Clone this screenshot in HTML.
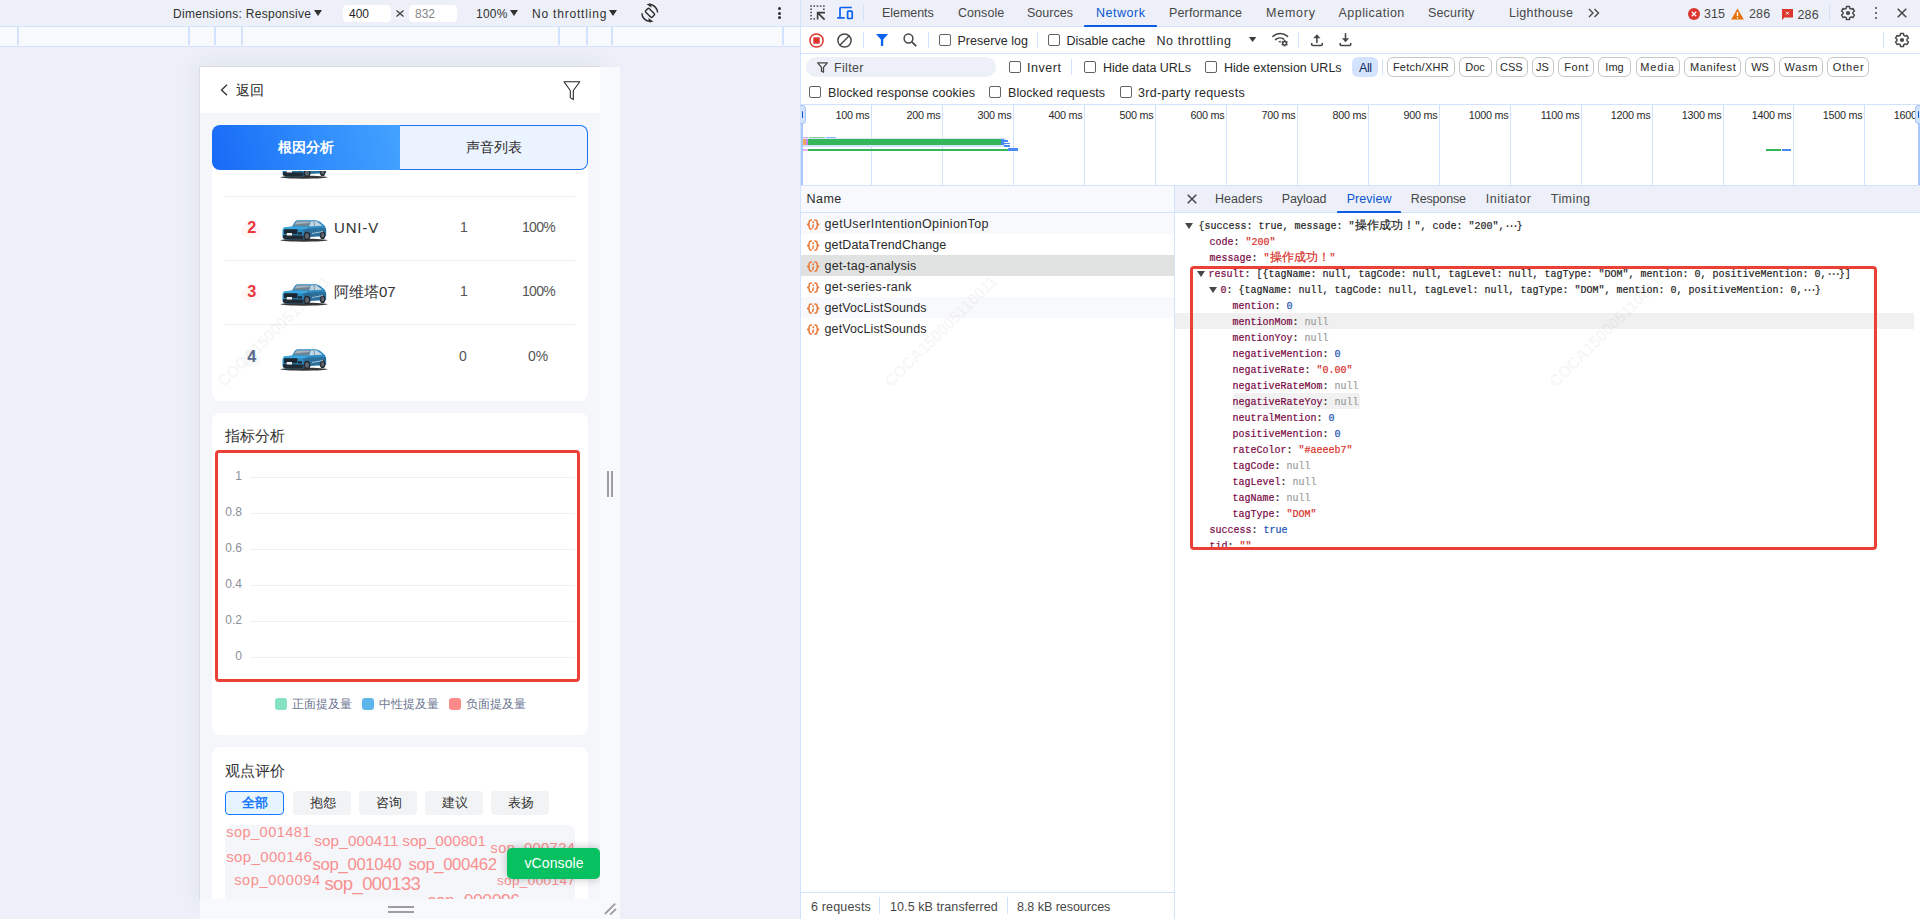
<!DOCTYPE html><html><head><meta charset="utf-8"><style>
html,body{margin:0;padding:0;width:1920px;height:919px;overflow:hidden;background:#edf0f8;font-family:'Liberation Sans',sans-serif;}
.a{position:absolute;box-sizing:border-box}
.t{position:absolute;white-space:nowrap}
svg{position:absolute;overflow:visible}
</style></head><body>

<div class="t" style="left:173px;top:7.84px;font-size:12px;line-height:12px;color:#303030;font-weight:400;font-family:'Liberation Sans',sans-serif;letter-spacing:0.283px;">Dimensions: Responsive</div>
<svg style="left:314px;top:10px" width="8" height="6"><path d="M0 0H8L4.0 6Z" fill="#303030"/></svg>
<div class="a" style="left:343px;top:5px;width:48px;height:17px;background:#fff;border-radius:4px"></div>
<div class="t" style="left:349px;top:7.84px;font-size:12px;line-height:12px;color:#1f1f1f;font-weight:400;font-family:'Liberation Sans',sans-serif;">400</div>
<svg style="left:396px;top:10px" width="8" height="7"><path d="M0.5 0.5L7.5 6.5M7.5 0.5L0.5 6.5" stroke="#3a3a3a" stroke-width="1.15"/></svg>
<div class="a" style="left:409px;top:5px;width:48px;height:17px;background:#fff;border-radius:4px"></div>
<div class="t" style="left:415px;top:7.84px;font-size:12px;line-height:12px;color:#858585;font-weight:400;font-family:'Liberation Sans',sans-serif;">832</div>
<div class="t" style="left:476px;top:7.84px;font-size:12px;line-height:12px;color:#303030;font-weight:400;font-family:'Liberation Sans',sans-serif;letter-spacing:0.232px;">100%</div>
<svg style="left:510px;top:10px" width="8" height="6"><path d="M0 0H8L4.0 6Z" fill="#303030"/></svg>
<div class="t" style="left:532px;top:7.84px;font-size:12px;line-height:12px;color:#303030;font-weight:400;font-family:'Liberation Sans',sans-serif;letter-spacing:0.800px;">No throttling</div>
<svg style="left:609px;top:10px" width="8" height="6"><path d="M0 0H8L4.0 6Z" fill="#303030"/></svg>
<svg style="left:636px;top:0px" width="28" height="26" viewBox="0 0 28 26"><g fill="none" stroke="#303030" stroke-width="1.5">
<rect x="9.4" y="10.4" width="9.2" height="5" rx="1.2" transform="rotate(45 14 12.9)"/>
<path d="M21.6 12.6A8.2 8.2 0 0 0 13.2 4.6"/><path d="M5.9 13.2A8.2 8.2 0 0 0 14.6 21.3"/></g>
<path d="M10.6 4.2L14.6 3.2L15.6 7.8Z" fill="#303030"/><path d="M17.4 21.6L13.4 22.4L12.2 17.9Z" fill="#303030"/></svg>
<div class="a" style="left:777.5px;top:7px;width:3px;height:3px;background:#303030;border-radius:50%"></div>
<div class="a" style="left:777.5px;top:11.5px;width:3px;height:3px;background:#303030;border-radius:50%"></div>
<div class="a" style="left:777.5px;top:16px;width:3px;height:3px;background:#303030;border-radius:50%"></div>
<div class="a" style="left:0px;top:26px;width:800px;height:21px;background:#f8f9fd;border-top:1px solid #d3e3fd;border-bottom:1px solid #d3e3fd"></div>
<div class="a" style="left:16.5px;top:27px;width:2px;height:18px;background:#d3e3fd"></div>
<div class="a" style="left:188px;top:27px;width:2px;height:18px;background:#d3e3fd"></div>
<div class="a" style="left:213.5px;top:27px;width:2px;height:18px;background:#d3e3fd"></div>
<div class="a" style="left:240.5px;top:27px;width:2px;height:18px;background:#d3e3fd"></div>
<div class="a" style="left:558px;top:27px;width:2px;height:18px;background:#d3e3fd"></div>
<div class="a" style="left:586px;top:27px;width:2px;height:18px;background:#d3e3fd"></div>
<div class="a" style="left:611px;top:27px;width:2px;height:18px;background:#d3e3fd"></div>
<div class="a" style="left:782px;top:27px;width:2px;height:18px;background:#d3e3fd"></div>
<div class="a" style="left:200px;top:67px;width:400px;height:832px;box-shadow:0 0 22px 2px rgba(40,50,90,0.07);background:#f5f6fa"></div>
<div class="a" style="left:199px;top:66px;width:1px;height:833px;background:#dcdee4"></div>
<div class="a" style="left:199px;top:66px;width:401px;height:1px;background:#dcdee4"></div>
<div class="a" style="left:200px;top:67px;width:400px;height:46px;background:#fff"></div>
<svg style="left:220px;top:84px" width="8" height="12"><path d="M7 0.8L1.5 6L7 11.2" fill="none" stroke="#303030" stroke-width="1.3"/></svg>
<div class="t" style="left:236px;top:83.15px;font-size:14px;line-height:14px;color:#1f1f1f;font-weight:400;font-family:'Liberation Sans',sans-serif;">返回</div>
<svg style="left:563px;top:81px" width="18" height="20"><path d="M1 0.7H16.8L10.3 9.5V18.6L7.3 16.6V9.5Z" fill="none" stroke="#222" stroke-width="1.05" stroke-linejoin="round"/></svg>
<div class="a" style="left:212px;top:150px;width:376px;height:251px;background:#fff;border-radius:0 0 8px 8px"></div>
<div class="a" style="left:212px;top:125px;width:188px;height:45px;background:linear-gradient(75deg,#186af6 0%,#2f8cfc 55%,#44a2ff 100%);border-radius:8px 0 0 8px"></div>
<div class="a" style="left:400px;top:125px;width:188px;height:45px;background:#ebf3ff;border:1px solid #1b72f5;border-left:none;border-radius:0 8px 8px 0"></div>
<div class="t" style="left:278px;top:140.40px;font-size:14.3px;line-height:14.3px;color:#fff;font-weight:700;font-family:'Liberation Sans',sans-serif;">根因分析</div>
<div class="t" style="left:466px;top:140.15px;font-size:14px;line-height:14px;color:#2b2b2b;font-weight:400;font-family:'Liberation Sans',sans-serif;">声音列表</div>
<div class="a" style="left:225px;top:196px;width:350px;height:1px;background:#eceef2"></div>
<div class="a" style="left:225px;top:260px;width:350px;height:1px;background:#eceef2"></div>
<div class="a" style="left:225px;top:324px;width:350px;height:1px;background:#eceef2"></div>
<div class="a" style="left:212px;top:171px;width:376px;height:10px;overflow:hidden">
<svg style="left:64px;top:-18.5px" width="56" height="28" viewBox="0 0 56 28">
<ellipse cx="28" cy="24.2" rx="23.5" ry="1.5" fill="#050505" opacity="0.8"/>
<path d="M6.5 14L8 11.5L16 10.5L19 5.5L21 4.3H40L44 5.8L49 10L50.2 14V19.5L48.5 21L44 21L43 20.2L35 20.8L34 22L27.5 23.2L9 23.6L6.5 21.5Z" fill="#2b8bc2"/>
<path d="M27 13L50 12V19.5L43 20.2L35 20.8L28 19.5Z" fill="#2d6f98"/>
<path d="M8 11.6L17 10.4L33.5 10.6L29 13.2L8.2 13.2Z" fill="#3ba7de"/>
<path d="M17.5 9.8L20.5 5.2L34.5 5L32.5 10.4Z" fill="#6f8493"/><path d="M18.3 8.6L20.8 5.6L33.8 5.4L33.2 7Z" fill="#9fb2bf"/>
<path d="M34.8 5.3L40.5 5.3L46.5 9.8L33.2 10.4Z" fill="#c3d5e2"/>
<path d="M38 5.3L38.6 10" stroke="#6c8aa0" stroke-width="0.8"/>
<rect x="8" y="13.2" width="13.5" height="5" rx="1" fill="#1c2731"/>
<path d="M7 19L27.5 19.5L27.5 23.2L9 23.6L7 22Z" fill="#202b35"/>
<rect x="10.7" y="17" width="5.3" height="2.5" fill="#eef2f4"/>
<rect x="22" y="16.3" width="4" height="2.2" fill="#1c2731"/>
<ellipse cx="31" cy="20" rx="3.3" ry="4.2" fill="#262b32"/><ellipse cx="31" cy="20" rx="2" ry="2.8" fill="#5f6772"/>
<ellipse cx="46.6" cy="19.2" rx="2.7" ry="3.9" fill="#262b32"/><ellipse cx="46.6" cy="19.2" rx="1.5" ry="2.4" fill="#5f6772"/>
<path d="M36 17.5L47 15.5" stroke="#a9cfe6" stroke-width="0.9"/>
</svg>
</div>
<svg style="left:241px;top:218px" width="20" height="21"><path d="M8.8 1C11 5 20 8.5 20 13A10 6.8 0 0 1 0 13C0 8.5 6.5 5 8.8 1Z" fill="rgba(255,110,110,0.06)"/></svg>
<div class="t" style="left:247.2px;top:219.20px;font-size:16.3px;line-height:16.3px;color:#e8383d;font-weight:700;font-family:'Liberation Sans',sans-serif;">2</div>
<svg style="left:276px;top:216px" width="56" height="28" viewBox="0 0 56 28">
<ellipse cx="28" cy="24.2" rx="23.5" ry="1.5" fill="#050505" opacity="0.8"/>
<path d="M6.5 14L8 11.5L16 10.5L19 5.5L21 4.3H40L44 5.8L49 10L50.2 14V19.5L48.5 21L44 21L43 20.2L35 20.8L34 22L27.5 23.2L9 23.6L6.5 21.5Z" fill="#2b8bc2"/>
<path d="M27 13L50 12V19.5L43 20.2L35 20.8L28 19.5Z" fill="#2d6f98"/>
<path d="M8 11.6L17 10.4L33.5 10.6L29 13.2L8.2 13.2Z" fill="#3ba7de"/>
<path d="M17.5 9.8L20.5 5.2L34.5 5L32.5 10.4Z" fill="#6f8493"/><path d="M18.3 8.6L20.8 5.6L33.8 5.4L33.2 7Z" fill="#9fb2bf"/>
<path d="M34.8 5.3L40.5 5.3L46.5 9.8L33.2 10.4Z" fill="#c3d5e2"/>
<path d="M38 5.3L38.6 10" stroke="#6c8aa0" stroke-width="0.8"/>
<rect x="8" y="13.2" width="13.5" height="5" rx="1" fill="#1c2731"/>
<path d="M7 19L27.5 19.5L27.5 23.2L9 23.6L7 22Z" fill="#202b35"/>
<rect x="10.7" y="17" width="5.3" height="2.5" fill="#eef2f4"/>
<rect x="22" y="16.3" width="4" height="2.2" fill="#1c2731"/>
<ellipse cx="31" cy="20" rx="3.3" ry="4.2" fill="#262b32"/><ellipse cx="31" cy="20" rx="2" ry="2.8" fill="#5f6772"/>
<ellipse cx="46.6" cy="19.2" rx="2.7" ry="3.9" fill="#262b32"/><ellipse cx="46.6" cy="19.2" rx="1.5" ry="2.4" fill="#5f6772"/>
<path d="M36 17.5L47 15.5" stroke="#a9cfe6" stroke-width="0.9"/>
</svg>
<div class="t" style="left:334px;top:220.30px;font-size:15px;line-height:15px;color:#333;font-weight:400;font-family:'Liberation Sans',sans-serif;letter-spacing:0.839px;">UNI-V</div>
<div class="t" style="left:460px;top:220.15px;font-size:14px;line-height:14px;color:#555;font-weight:400;font-family:'Liberation Sans',sans-serif;">1</div>
<div class="t" style="left:522px;top:220.15px;font-size:14px;line-height:14px;color:#555;font-weight:400;font-family:'Liberation Sans',sans-serif;letter-spacing:-0.704px;">100%</div>
<svg style="left:241px;top:282px" width="20" height="21"><path d="M8.8 1C11 5 20 8.5 20 13A10 6.8 0 0 1 0 13C0 8.5 6.5 5 8.8 1Z" fill="rgba(255,110,110,0.06)"/></svg>
<div class="t" style="left:247.2px;top:283.20px;font-size:16.3px;line-height:16.3px;color:#e8383d;font-weight:700;font-family:'Liberation Sans',sans-serif;">3</div>
<svg style="left:276px;top:280px" width="56" height="28" viewBox="0 0 56 28">
<ellipse cx="28" cy="24.2" rx="23.5" ry="1.5" fill="#050505" opacity="0.8"/>
<path d="M6.5 14L8 11.5L16 10.5L19 5.5L21 4.3H40L44 5.8L49 10L50.2 14V19.5L48.5 21L44 21L43 20.2L35 20.8L34 22L27.5 23.2L9 23.6L6.5 21.5Z" fill="#2b8bc2"/>
<path d="M27 13L50 12V19.5L43 20.2L35 20.8L28 19.5Z" fill="#2d6f98"/>
<path d="M8 11.6L17 10.4L33.5 10.6L29 13.2L8.2 13.2Z" fill="#3ba7de"/>
<path d="M17.5 9.8L20.5 5.2L34.5 5L32.5 10.4Z" fill="#6f8493"/><path d="M18.3 8.6L20.8 5.6L33.8 5.4L33.2 7Z" fill="#9fb2bf"/>
<path d="M34.8 5.3L40.5 5.3L46.5 9.8L33.2 10.4Z" fill="#c3d5e2"/>
<path d="M38 5.3L38.6 10" stroke="#6c8aa0" stroke-width="0.8"/>
<rect x="8" y="13.2" width="13.5" height="5" rx="1" fill="#1c2731"/>
<path d="M7 19L27.5 19.5L27.5 23.2L9 23.6L7 22Z" fill="#202b35"/>
<rect x="10.7" y="17" width="5.3" height="2.5" fill="#eef2f4"/>
<rect x="22" y="16.3" width="4" height="2.2" fill="#1c2731"/>
<ellipse cx="31" cy="20" rx="3.3" ry="4.2" fill="#262b32"/><ellipse cx="31" cy="20" rx="2" ry="2.8" fill="#5f6772"/>
<ellipse cx="46.6" cy="19.2" rx="2.7" ry="3.9" fill="#262b32"/><ellipse cx="46.6" cy="19.2" rx="1.5" ry="2.4" fill="#5f6772"/>
<path d="M36 17.5L47 15.5" stroke="#a9cfe6" stroke-width="0.9"/>
</svg>
<div class="t" style="left:334px;top:284.30px;font-size:15px;line-height:15px;color:#333;font-weight:400;font-family:'Liberation Sans',sans-serif;">阿维塔07</div>
<div class="t" style="left:460px;top:284.15px;font-size:14px;line-height:14px;color:#555;font-weight:400;font-family:'Liberation Sans',sans-serif;">1</div>
<div class="t" style="left:522px;top:284.15px;font-size:14px;line-height:14px;color:#555;font-weight:400;font-family:'Liberation Sans',sans-serif;letter-spacing:-0.704px;">100%</div>
<svg style="left:241px;top:347px" width="20" height="21"><path d="M8.8 1C11 5 20 8.5 20 13A10 6.8 0 0 1 0 13C0 8.5 6.5 5 8.8 1Z" fill="rgba(120,140,180,0.05)"/></svg>
<div class="t" style="left:247.2px;top:348.20px;font-size:16.3px;line-height:16.3px;color:#5b6b8d;font-weight:700;font-family:'Liberation Sans',sans-serif;">4</div>
<svg style="left:276px;top:344.5px" width="56" height="28" viewBox="0 0 56 28">
<ellipse cx="28" cy="24.2" rx="23.5" ry="1.5" fill="#050505" opacity="0.8"/>
<path d="M6.5 14L8 11.5L16 10.5L19 5.5L21 4.3H40L44 5.8L49 10L50.2 14V19.5L48.5 21L44 21L43 20.2L35 20.8L34 22L27.5 23.2L9 23.6L6.5 21.5Z" fill="#2b8bc2"/>
<path d="M27 13L50 12V19.5L43 20.2L35 20.8L28 19.5Z" fill="#2d6f98"/>
<path d="M8 11.6L17 10.4L33.5 10.6L29 13.2L8.2 13.2Z" fill="#3ba7de"/>
<path d="M17.5 9.8L20.5 5.2L34.5 5L32.5 10.4Z" fill="#6f8493"/><path d="M18.3 8.6L20.8 5.6L33.8 5.4L33.2 7Z" fill="#9fb2bf"/>
<path d="M34.8 5.3L40.5 5.3L46.5 9.8L33.2 10.4Z" fill="#c3d5e2"/>
<path d="M38 5.3L38.6 10" stroke="#6c8aa0" stroke-width="0.8"/>
<rect x="8" y="13.2" width="13.5" height="5" rx="1" fill="#1c2731"/>
<path d="M7 19L27.5 19.5L27.5 23.2L9 23.6L7 22Z" fill="#202b35"/>
<rect x="10.7" y="17" width="5.3" height="2.5" fill="#eef2f4"/>
<rect x="22" y="16.3" width="4" height="2.2" fill="#1c2731"/>
<ellipse cx="31" cy="20" rx="3.3" ry="4.2" fill="#262b32"/><ellipse cx="31" cy="20" rx="2" ry="2.8" fill="#5f6772"/>
<ellipse cx="46.6" cy="19.2" rx="2.7" ry="3.9" fill="#262b32"/><ellipse cx="46.6" cy="19.2" rx="1.5" ry="2.4" fill="#5f6772"/>
<path d="M36 17.5L47 15.5" stroke="#a9cfe6" stroke-width="0.9"/>
</svg>
<div class="t" style="left:459px;top:349.15px;font-size:14px;line-height:14px;color:#555;font-weight:400;font-family:'Liberation Sans',sans-serif;">0</div>
<div class="t" style="left:528px;top:349.15px;font-size:14px;line-height:14px;color:#555;font-weight:400;font-family:'Liberation Sans',sans-serif;letter-spacing:0.066px;">0%</div>
<div class="a" style="left:212px;top:413px;width:376px;height:322px;background:#fff;border-radius:8px"></div>
<div class="t" style="left:225px;top:428.30px;font-size:15px;line-height:15px;color:#333;font-weight:400;font-family:'Liberation Sans',sans-serif;">指标分析</div>
<div class="a" style="left:250px;top:477px;width:325px;height:1px;background:#eef0f4"></div>
<div class="t" style="left:190px;width:52px;text-align:right;top:469px;font-size:12px;line-height:14px;color:#8a8f99">1</div>
<div class="a" style="left:250px;top:513px;width:325px;height:1px;background:#eef0f4"></div>
<div class="t" style="left:190px;width:52px;text-align:right;top:505px;font-size:12px;line-height:14px;color:#8a8f99">0.8</div>
<div class="a" style="left:250px;top:549px;width:325px;height:1px;background:#eef0f4"></div>
<div class="t" style="left:190px;width:52px;text-align:right;top:541px;font-size:12px;line-height:14px;color:#8a8f99">0.6</div>
<div class="a" style="left:250px;top:585px;width:325px;height:1px;background:#eef0f4"></div>
<div class="t" style="left:190px;width:52px;text-align:right;top:577px;font-size:12px;line-height:14px;color:#8a8f99">0.4</div>
<div class="a" style="left:250px;top:621px;width:325px;height:1px;background:#eef0f4"></div>
<div class="t" style="left:190px;width:52px;text-align:right;top:613px;font-size:12px;line-height:14px;color:#8a8f99">0.2</div>
<div class="a" style="left:250px;top:657px;width:325px;height:1px;background:#eef0f4"></div>
<div class="t" style="left:190px;width:52px;text-align:right;top:649px;font-size:12px;line-height:14px;color:#8a8f99">0</div>
<div class="a" style="left:215px;top:450px;width:365px;height:232px;border:3px solid #ec3f35;border-radius:4px"></div>
<div class="a" style="left:274.5px;top:698px;width:12px;height:12px;background:#84e1c2;border-radius:3px"></div>
<div class="t" style="left:291.5px;top:697.84px;font-size:12px;line-height:12px;color:#6b7590;font-weight:400;font-family:'Liberation Sans',sans-serif;">正面提及量</div>
<div class="a" style="left:361.5px;top:698px;width:12px;height:12px;background:#5eb6ea;border-radius:3px"></div>
<div class="t" style="left:378.5px;top:697.84px;font-size:12px;line-height:12px;color:#6b7590;font-weight:400;font-family:'Liberation Sans',sans-serif;">中性提及量</div>
<div class="a" style="left:448.5px;top:698px;width:12px;height:12px;background:#fe8a8a;border-radius:3px"></div>
<div class="t" style="left:465.5px;top:697.84px;font-size:12px;line-height:12px;color:#6b7590;font-weight:400;font-family:'Liberation Sans',sans-serif;">负面提及量</div>
<div class="a" style="left:212px;top:747px;width:376px;height:200px;background:#fff;border-radius:8px"></div>
<div class="t" style="left:225px;top:763.30px;font-size:15px;line-height:15px;color:#333;font-weight:400;font-family:'Liberation Sans',sans-serif;">观点评价</div>
<div class="a" style="left:225px;top:791px;width:59px;height:24px;background:#e6f4ff;border:1px solid #1677ff;border-radius:4px"></div>
<div class="t" style="left:242px;top:796.00px;font-size:13px;line-height:13px;color:#1677ff;font-weight:700;font-family:'Liberation Sans',sans-serif;">全部</div>
<div class="a" style="left:293px;top:791px;width:58px;height:24px;background:#f2f3f5;border-radius:4px"></div>
<div class="t" style="left:309.5px;top:795.50px;font-size:13px;line-height:13px;color:#333;font-weight:400;font-family:'Liberation Sans',sans-serif;">抱怨</div>
<div class="a" style="left:359px;top:791px;width:58px;height:24px;background:#f2f3f5;border-radius:4px"></div>
<div class="t" style="left:375.5px;top:795.50px;font-size:13px;line-height:13px;color:#333;font-weight:400;font-family:'Liberation Sans',sans-serif;">咨询</div>
<div class="a" style="left:425px;top:791px;width:58px;height:24px;background:#f2f3f5;border-radius:4px"></div>
<div class="t" style="left:441.5px;top:795.50px;font-size:13px;line-height:13px;color:#333;font-weight:400;font-family:'Liberation Sans',sans-serif;">建议</div>
<div class="a" style="left:491px;top:791px;width:58px;height:24px;background:#f2f3f5;border-radius:4px"></div>
<div class="t" style="left:507.5px;top:795.50px;font-size:13px;line-height:13px;color:#333;font-weight:400;font-family:'Liberation Sans',sans-serif;">表扬</div>
<div class="a" style="left:225px;top:825px;width:350px;height:90px;background:#f5f6fa;border-radius:8px 8px 0 0"></div>
<div class="a" style="left:225px;top:825px;width:350px;height:74px;overflow:hidden">
<div class="t" style="left:1.1999999999999886px;top:0.33px;font-size:14.5px;line-height:14.5px;color:#f8908f;font-weight:400;font-family:'Liberation Sans',sans-serif;letter-spacing:0.497px;">sop_001481</div>
<div class="t" style="left:89.19999999999999px;top:7.80px;font-size:15.3px;line-height:15.3px;color:#f8908f;font-weight:400;font-family:'Liberation Sans',sans-serif;letter-spacing:0.134px;">sop_000411</div>
<div class="t" style="left:177.3px;top:7.80px;font-size:15.3px;line-height:15.3px;color:#f8908f;font-weight:400;font-family:'Liberation Sans',sans-serif;letter-spacing:-0.047px;">sop_000801</div>
<div class="t" style="left:265.4px;top:16.44px;font-size:14.6px;line-height:14.6px;color:#f8908f;font-weight:400;font-family:'Liberation Sans',sans-serif;letter-spacing:0.460px;">sop_000724</div>
<div class="t" style="left:1.1999999999999886px;top:24.10px;font-size:15px;line-height:15px;color:#f8908f;font-weight:400;font-family:'Liberation Sans',sans-serif;letter-spacing:0.367px;">sop_000146</div>
<div class="t" style="left:87.60000000000002px;top:31.53px;font-size:16.8px;line-height:16.8px;color:#f8908f;font-weight:400;font-family:'Liberation Sans',sans-serif;letter-spacing:-0.388px;">sop_001040</div>
<div class="t" style="left:183.5px;top:31.53px;font-size:16.8px;line-height:16.8px;color:#f8908f;font-weight:400;font-family:'Liberation Sans',sans-serif;letter-spacing:-0.421px;">sop_000462</div>
<div class="t" style="left:9.199999999999989px;top:47.94px;font-size:14.6px;line-height:14.6px;color:#f8908f;font-weight:400;font-family:'Liberation Sans',sans-serif;letter-spacing:0.627px;">sop_000094</div>
<div class="t" style="left:99.39999999999998px;top:50.09px;font-size:18.5px;line-height:18.5px;color:#f8908f;font-weight:400;font-family:'Liberation Sans',sans-serif;letter-spacing:-0.595px;">sop_000133</div>
<div class="t" style="left:271.9px;top:49.19px;font-size:13.6px;line-height:13.6px;color:#f8908f;font-weight:400;font-family:'Liberation Sans',sans-serif;letter-spacing:0.351px;">sop_000147</div>
<div class="t" style="left:202.5px;top:68.19px;font-size:17.5px;line-height:17.5px;color:#f8908f;font-weight:400;font-family:'Liberation Sans',sans-serif;letter-spacing:-0.429px;">sop_000096</div>
</div>
<div class="a" style="left:507px;top:848px;width:93px;height:31px;background:#07c160;border-radius:5px;box-shadow:0 0 8px rgba(0,0,0,0.25)"></div>
<div class="t" style="left:524.5px;top:856.15px;font-size:14px;line-height:14px;color:#fff;font-weight:400;font-family:'Liberation Sans',sans-serif;letter-spacing:0.104px;">vConsole</div>
<div class="a" style="left:600px;top:67px;width:20px;height:852px;background:#f8f9fd"></div>
<div class="a" style="left:200px;top:899px;width:420px;height:20px;background:#f8f9fd"></div>
<div class="a" style="left:607px;top:471px;width:2px;height:26px;background:#9e9e9e"></div>
<div class="a" style="left:611px;top:471px;width:2px;height:26px;background:#9e9e9e"></div>
<div class="a" style="left:388px;top:906px;width:26px;height:2px;background:#9e9e9e"></div>
<div class="a" style="left:388px;top:911px;width:26px;height:2px;background:#9e9e9e"></div>
<svg style="left:602px;top:902px" width="16" height="16"><path d="M2.8 12L13.2 1.7M8.2 12.6L14 6.9" stroke="#9e9e9e" stroke-width="1.9"/></svg>
<div class="a" style="left:800px;top:0px;width:1120px;height:919px;background:#fff"></div>
<div class="a" style="left:800px;top:0px;width:1px;height:919px;background:#d3e3fd"></div>
<div class="a" style="left:801px;top:0px;width:1119px;height:27px;background:#edf0f8;border-bottom:1px solid #d3e3fd"></div>
<svg style="left:809.6px;top:5.4px" width="16" height="16" viewBox="0 0 16 16"><g fill="#3c3c3c"><rect x="0.30000000000000004" y="0.30000000000000004" width="1.5" height="1.5"/><rect x="3.5" y="0.30000000000000004" width="1.5" height="1.5"/><rect x="6.7" y="0.30000000000000004" width="1.5" height="1.5"/><rect x="9.9" y="0.30000000000000004" width="1.5" height="1.5"/><rect x="13.100000000000001" y="0.30000000000000004" width="1.5" height="1.5"/><rect x="0.30000000000000004" y="3.5" width="1.5" height="1.5"/><rect x="0.30000000000000004" y="6.7" width="1.5" height="1.5"/><rect x="0.30000000000000004" y="9.9" width="1.5" height="1.5"/><rect x="0.30000000000000004" y="13.100000000000001" width="1.5" height="1.5"/><rect x="3.5" y="13.100000000000001" width="1.5" height="1.5"/><rect x="13.100000000000001" y="3.5" width="1.5" height="1.5"/></g>
<path d="M7.6 14.6V7.6H15M8.1 8.1L14.6 14.6" stroke="#3c3c3c" stroke-width="1.6" fill="none"/></svg>
<svg style="left:836px;top:6px" width="18" height="14" viewBox="0 0 18 14"><g fill="none" stroke="#0b62f0" stroke-width="1.7" stroke-linejoin="round">
<path d="M4 11.6V2.5Q4 1.5 5 1.5H15.8"/><path d="M1.2 11.9H8.8"/><rect x="11.6" y="5.1" width="4.6" height="7.4" rx="0.8"/></g></svg>
<div class="a" style="left:863px;top:5px;width:1px;height:16px;background:#d3e3fd"></div>
<div class="t" style="left:882px;top:7.42px;font-size:12.5px;line-height:12.5px;color:#474747;font-weight:400;font-family:'Liberation Sans',sans-serif;letter-spacing:-0.044px;">Elements</div>
<div class="t" style="left:958px;top:7.42px;font-size:12.5px;line-height:12.5px;color:#474747;font-weight:400;font-family:'Liberation Sans',sans-serif;letter-spacing:0.054px;">Console</div>
<div class="t" style="left:1027px;top:7.42px;font-size:12.5px;line-height:12.5px;color:#474747;font-weight:400;font-family:'Liberation Sans',sans-serif;letter-spacing:0.023px;">Sources</div>
<div class="t" style="left:1096px;top:7.42px;font-size:12.5px;line-height:12.5px;color:#0b57d0;font-weight:400;font-family:'Liberation Sans',sans-serif;letter-spacing:0.526px;">Network</div>
<div class="t" style="left:1169px;top:7.42px;font-size:12.5px;line-height:12.5px;color:#474747;font-weight:400;font-family:'Liberation Sans',sans-serif;letter-spacing:0.144px;">Performance</div>
<div class="t" style="left:1266px;top:7.42px;font-size:12.5px;line-height:12.5px;color:#474747;font-weight:400;font-family:'Liberation Sans',sans-serif;letter-spacing:0.769px;">Memory</div>
<div class="t" style="left:1338.5px;top:7.42px;font-size:12.5px;line-height:12.5px;color:#474747;font-weight:400;font-family:'Liberation Sans',sans-serif;letter-spacing:0.464px;">Application</div>
<div class="t" style="left:1428px;top:7.42px;font-size:12.5px;line-height:12.5px;color:#474747;font-weight:400;font-family:'Liberation Sans',sans-serif;letter-spacing:0.163px;">Security</div>
<div class="t" style="left:1509px;top:7.42px;font-size:12.5px;line-height:12.5px;color:#474747;font-weight:400;font-family:'Liberation Sans',sans-serif;letter-spacing:0.314px;">Lighthouse</div>
<div class="a" style="left:1084px;top:25px;width:73px;height:2px;background:#0a5ce6;border-radius:1px 1px 0 0"></div>
<svg style="left:1588px;top:8px" width="12" height="10"><path d="M1 1L5 5L1 9M6.5 1L10.5 5L6.5 9" fill="none" stroke="#474747" stroke-width="1.4"/></svg>
<svg style="left:1688px;top:8px" width="12" height="12"><circle cx="6" cy="6" r="6" fill="#dc362e"/><path d="M3.8 3.8L8.2 8.2M8.2 3.8L3.8 8.2" stroke="#fff" stroke-width="1.3"/></svg>
<div class="t" style="left:1704px;top:8.42px;font-size:12.5px;line-height:12.5px;color:#474747;font-weight:400;font-family:'Liberation Sans',sans-serif;letter-spacing:0.070px;">315</div>
<svg style="left:1731px;top:8px" width="13" height="12"><path d="M6.5 0.5L12.8 11.5H0.2Z" fill="#e8710a"/><rect x="5.8" y="4" width="1.4" height="4" fill="#fff"/><rect x="5.8" y="9" width="1.4" height="1.4" fill="#fff"/></svg>
<div class="t" style="left:1749px;top:8.42px;font-size:12.5px;line-height:12.5px;color:#474747;font-weight:400;font-family:'Liberation Sans',sans-serif;letter-spacing:0.170px;">286</div>
<svg style="left:1782px;top:9px" width="11" height="11"><path d="M0 0H11V8.5H2.5L0 11Z" fill="#dc362e"/><path d="M4 2.8L6.8 5.6M6.8 2.8L4 5.6" stroke="#fff" stroke-width="1"/></svg>
<div class="t" style="left:1797.5px;top:8.92px;font-size:12.5px;line-height:12.5px;color:#474747;font-weight:400;font-family:'Liberation Sans',sans-serif;letter-spacing:0.170px;">286</div>
<div class="a" style="left:1829px;top:5px;width:1px;height:16px;background:#d3e3fd"></div>
<svg style="left:1838px;top:2.6999999999999993px" width="20" height="20"><path d="M11.52 3.42L8.48 3.42L8.21 5.33L6.85 6.11L5.06 5.40L3.54 8.03L5.06 9.22L5.06 10.78L3.54 11.97L5.06 14.60L6.85 13.89L8.21 14.67L8.48 16.58L11.52 16.58L11.79 14.67L13.15 13.89L14.94 14.60L16.46 11.97L14.94 10.78L14.94 9.22L16.46 8.03L14.94 5.40L13.15 6.11L11.79 5.33Z" fill="none" stroke="#474747" stroke-width="1.45" stroke-linejoin="round"/><circle cx="10" cy="10" r="2.1" fill="#474747"/></svg>
<div class="a" style="left:1874.5px;top:6.8px;width:2.6px;height:2.6px;background:#474747;border-radius:50%"></div>
<div class="a" style="left:1874.5px;top:11.8px;width:2.6px;height:2.6px;background:#474747;border-radius:50%"></div>
<div class="a" style="left:1874.5px;top:16.8px;width:2.6px;height:2.6px;background:#474747;border-radius:50%"></div>
<svg style="left:1897px;top:8px" width="10" height="10"><path d="M0.7 0.7L9.3 9.3M9.3 0.7L0.7 9.3" stroke="#474747" stroke-width="1.5"/></svg>
<div class="a" style="left:801px;top:27px;width:1119px;height:27px;background:#fff;border-bottom:1px solid #d3e3fd"></div>
<svg style="left:809.3px;top:32.6px" width="15" height="15"><circle cx="7.5" cy="7.5" r="6.6" fill="none" stroke="#dc362e" stroke-width="1.5"/><rect x="4.3" y="4.3" width="6.4" height="6.4" fill="#dc362e"/></svg>
<svg style="left:837.4px;top:32.6px" width="15" height="15"><circle cx="7.5" cy="7.5" r="6.6" fill="none" stroke="#474747" stroke-width="1.5"/><path d="M12 3L3 12" stroke="#474747" stroke-width="1.5"/></svg>
<div class="a" style="left:863px;top:32px;width:1px;height:16px;background:#d3e3fd"></div>
<svg style="left:875.9px;top:33.9px" width="13" height="13"><path d="M0 0H12.1L7.2 5.6V11.9H4.9V5.6Z" fill="#0b62f0"/></svg>
<svg style="left:903px;top:33px" width="14" height="14"><circle cx="5.5" cy="5.5" r="4.4" fill="none" stroke="#474747" stroke-width="1.5"/><path d="M8.8 8.8L13.2 13.2" stroke="#474747" stroke-width="1.7"/></svg>
<div class="a" style="left:928px;top:32px;width:1px;height:16px;background:#d3e3fd"></div>
<div class="a" style="left:939px;top:34px;width:12px;height:12px;border:1px solid #5f6368;border-radius:2px;background:#fff"></div>
<div class="t" style="left:957.5px;top:35.42px;font-size:12.5px;line-height:12.5px;color:#2a2a2a;font-weight:400;font-family:'Liberation Sans',sans-serif;letter-spacing:0.028px;">Preserve log</div>
<div class="a" style="left:1037px;top:32px;width:1px;height:16px;background:#d3e3fd"></div>
<div class="a" style="left:1048px;top:34px;width:12px;height:12px;border:1px solid #5f6368;border-radius:2px;background:#fff"></div>
<div class="t" style="left:1066.5px;top:35.42px;font-size:12.5px;line-height:12.5px;color:#2a2a2a;font-weight:400;font-family:'Liberation Sans',sans-serif;letter-spacing:0.007px;">Disable cache</div>
<div class="t" style="left:1156.5px;top:35.42px;font-size:12.5px;line-height:12.5px;color:#2a2a2a;font-weight:400;font-family:'Liberation Sans',sans-serif;letter-spacing:0.583px;">No throttling</div>
<svg style="left:1249.4px;top:36.8px" width="7.2" height="5"><path d="M0 0H7.2L3.6 5Z" fill="#3a3a3a"/></svg>
<svg style="left:1272px;top:33px" width="17" height="15" viewBox="0 0 17 15"><g fill="none" stroke="#474747" stroke-width="1.5" stroke-linecap="round">
<path d="M0.9 3.4A11 11 0 0 1 15.6 3.4"/><path d="M3.5 6.6A6.5 6.5 0 0 1 11.8 6.2"/></g>
<path d="M6.2 8.8L8.6 7.6V10Z" fill="#474747"/>
<path d="M13.42 7.00L11.78 7.00L11.66 7.98L11.06 8.33L10.15 7.94L9.33 9.36L10.12 9.95L10.12 10.65L9.33 11.24L10.15 12.66L11.06 12.27L11.66 12.62L11.78 13.60L13.42 13.60L13.54 12.62L14.14 12.27L15.05 12.66L15.87 11.24L15.08 10.65L15.08 9.95L15.87 9.36L15.05 7.94L14.14 8.33L13.54 7.98Z" fill="#474747"/><circle cx="12.6" cy="10.3" r="1.1" fill="#fff"/></svg>
<div class="a" style="left:1298px;top:32px;width:1px;height:16px;background:#d3e3fd"></div>
<svg style="left:1310px;top:32px" width="14" height="15" viewBox="0 0 14 15"><path d="M6.9 11V4" stroke="#474747" stroke-width="1.6"/><path d="M3.3 6.2L6.9 2.2L10.5 6.2Z" fill="#474747"/><path d="M1.7 11V12.5Q1.7 13.5 2.7 13.5H11.2Q12.2 13.5 12.2 12.5V11" fill="none" stroke="#474747" stroke-width="1.6"/></svg>
<svg style="left:1338.5px;top:32px" width="14" height="15" viewBox="0 0 14 15"><path d="M6.5 1.2V8" stroke="#474747" stroke-width="1.6"/><path d="M2.9 6.3L6.5 10.3L10.1 6.3Z" fill="#474747"/><path d="M1.2 11V12.5Q1.2 13.5 2.2 13.5H10.7Q11.7 13.5 11.7 12.5V11" fill="none" stroke="#474747" stroke-width="1.6"/></svg>
<div class="a" style="left:1883px;top:32px;width:1px;height:16px;background:#d3e3fd"></div>
<svg style="left:1892px;top:29.9px" width="20" height="20"><path d="M11.52 3.42L8.48 3.42L8.21 5.33L6.85 6.11L5.06 5.40L3.54 8.03L5.06 9.22L5.06 10.78L3.54 11.97L5.06 14.60L6.85 13.89L8.21 14.67L8.48 16.58L11.52 16.58L11.79 14.67L13.15 13.89L14.94 14.60L16.46 11.97L14.94 10.78L14.94 9.22L16.46 8.03L14.94 5.40L13.15 6.11L11.79 5.33Z" fill="none" stroke="#474747" stroke-width="1.45" stroke-linejoin="round"/><circle cx="10" cy="10" r="2.1" fill="#474747"/></svg>
<div class="a" style="left:806px;top:57px;width:190px;height:20px;background:#edf0f8;border-radius:10px"></div>
<svg style="left:817px;top:62px" width="11" height="11"><path d="M0.7 0.8H10.3L6.5 5.3V10.3L4.5 9.2V5.3Z" fill="none" stroke="#474747" stroke-width="1.3" stroke-linejoin="round"/></svg>
<div class="t" style="left:834px;top:62.42px;font-size:12.5px;line-height:12.5px;color:#474747;font-weight:400;font-family:'Liberation Sans',sans-serif;letter-spacing:0.344px;">Filter</div>
<div class="a" style="left:1009px;top:61px;width:12px;height:12px;border:1px solid #5f6368;border-radius:2px;background:#fff"></div>
<div class="t" style="left:1027px;top:62.42px;font-size:12.5px;line-height:12.5px;color:#2a2a2a;font-weight:400;font-family:'Liberation Sans',sans-serif;letter-spacing:0.547px;">Invert</div>
<div class="a" style="left:1071px;top:59px;width:1px;height:16px;background:#d3e3fd"></div>
<div class="a" style="left:1084px;top:61px;width:12px;height:12px;border:1px solid #5f6368;border-radius:2px;background:#fff"></div>
<div class="t" style="left:1103px;top:62.42px;font-size:12.5px;line-height:12.5px;color:#2a2a2a;font-weight:400;font-family:'Liberation Sans',sans-serif;letter-spacing:-0.019px;">Hide data URLs</div>
<div class="a" style="left:1205px;top:61px;width:12px;height:12px;border:1px solid #5f6368;border-radius:2px;background:#fff"></div>
<div class="t" style="left:1224px;top:62.42px;font-size:12.5px;line-height:12.5px;color:#2a2a2a;font-weight:400;font-family:'Liberation Sans',sans-serif;letter-spacing:0.010px;">Hide extension URLs</div>
<div class="a" style="left:1352px;top:57px;width:26px;height:20px;background:#d3e3fd;border-radius:6px"></div>
<div class="t" style="left:1359px;top:62.42px;font-size:12.5px;line-height:12.5px;color:#142d63;font-weight:400;font-family:'Liberation Sans',sans-serif;letter-spacing:-0.453px;">All</div>
<div class="a" style="left:1382px;top:59px;width:1px;height:16px;background:#d3e3fd"></div>
<div class="a" style="left:1387px;top:57px;width:68px;height:20px;border:1px solid #c4c7c5;border-radius:6px"></div>
<div class="t" style="left:1392.9px;top:61.69px;font-size:11px;line-height:11px;color:#2a2a2a;font-weight:400;font-family:'Liberation Sans',sans-serif;letter-spacing:0.238px;">Fetch/XHR</div>
<div class="a" style="left:1459px;top:57px;width:32.5px;height:20px;border:1px solid #c4c7c5;border-radius:6px"></div>
<div class="t" style="left:1445.1px;width:60px;text-align:center;top:61.69px;font-size:11px;line-height:11px;color:#2a2a2a">Doc</div>
<div class="a" style="left:1496px;top:57px;width:31.5px;height:20px;border:1px solid #c4c7c5;border-radius:6px"></div>
<div class="t" style="left:1481.3999999999999px;width:60px;text-align:center;top:61.69px;font-size:11px;line-height:11px;color:#2a2a2a">CSS</div>
<div class="a" style="left:1532px;top:57px;width:22px;height:20px;border:1px solid #c4c7c5;border-radius:6px"></div>
<div class="t" style="left:1512.5px;width:60px;text-align:center;top:61.69px;font-size:11px;line-height:11px;color:#2a2a2a">JS</div>
<div class="a" style="left:1558px;top:57px;width:36px;height:20px;border:1px solid #c4c7c5;border-radius:6px"></div>
<div class="t" style="left:1564.2px;top:61.69px;font-size:11px;line-height:11px;color:#2a2a2a;font-weight:400;font-family:'Liberation Sans',sans-serif;letter-spacing:0.661px;">Font</div>
<div class="a" style="left:1598px;top:57px;width:32.5px;height:20px;border:1px solid #c4c7c5;border-radius:6px"></div>
<div class="t" style="left:1584.5px;width:60px;text-align:center;top:61.69px;font-size:11px;line-height:11px;color:#2a2a2a">Img</div>
<div class="a" style="left:1635.5px;top:57px;width:44.0px;height:20px;border:1px solid #c4c7c5;border-radius:6px"></div>
<div class="t" style="left:1640.2px;top:61.69px;font-size:11px;line-height:11px;color:#2a2a2a;font-weight:400;font-family:'Liberation Sans',sans-serif;letter-spacing:0.933px;">Media</div>
<div class="a" style="left:1684px;top:57px;width:57px;height:20px;border:1px solid #c4c7c5;border-radius:6px"></div>
<div class="t" style="left:1690.0px;top:61.69px;font-size:11px;line-height:11px;color:#2a2a2a;font-weight:400;font-family:'Liberation Sans',sans-serif;letter-spacing:0.589px;">Manifest</div>
<div class="a" style="left:1745px;top:57px;width:29.5px;height:20px;border:1px solid #c4c7c5;border-radius:6px"></div>
<div class="t" style="left:1730.0px;width:60px;text-align:center;top:61.69px;font-size:11px;line-height:11px;color:#2a2a2a">WS</div>
<div class="a" style="left:1779px;top:57px;width:43.5px;height:20px;border:1px solid #c4c7c5;border-radius:6px"></div>
<div class="t" style="left:1784.5px;top:61.69px;font-size:11px;line-height:11px;color:#2a2a2a;font-weight:400;font-family:'Liberation Sans',sans-serif;letter-spacing:0.711px;">Wasm</div>
<div class="a" style="left:1827px;top:57px;width:41.5px;height:20px;border:1px solid #c4c7c5;border-radius:6px"></div>
<div class="t" style="left:1832.7px;top:61.69px;font-size:11px;line-height:11px;color:#2a2a2a;font-weight:400;font-family:'Liberation Sans',sans-serif;letter-spacing:0.896px;">Other</div>
<div class="a" style="left:809px;top:86px;width:12px;height:12px;border:1px solid #5f6368;border-radius:2px;background:#fff"></div>
<div class="t" style="left:828px;top:87.42px;font-size:12.5px;line-height:12.5px;color:#2a2a2a;font-weight:400;font-family:'Liberation Sans',sans-serif;letter-spacing:0.077px;">Blocked response cookies</div>
<div class="a" style="left:989px;top:86px;width:12px;height:12px;border:1px solid #5f6368;border-radius:2px;background:#fff"></div>
<div class="t" style="left:1008px;top:87.42px;font-size:12.5px;line-height:12.5px;color:#2a2a2a;font-weight:400;font-family:'Liberation Sans',sans-serif;letter-spacing:0.074px;">Blocked requests</div>
<div class="a" style="left:1120px;top:86px;width:12px;height:12px;border:1px solid #5f6368;border-radius:2px;background:#fff"></div>
<div class="t" style="left:1138px;top:87.42px;font-size:12.5px;line-height:12.5px;color:#2a2a2a;font-weight:400;font-family:'Liberation Sans',sans-serif;letter-spacing:0.310px;">3rd-party requests</div>
<div class="a" style="left:801px;top:104px;width:1119px;height:1px;background:#d3e3fd"></div>
<div class="a" style="left:801px;top:105px;width:1119px;height:81px;background:#fff"></div>
<div class="a" style="left:871px;top:105px;width:1px;height:80px;background:#d3e3fd"></div>
<div class="t" style="left:791.5px;width:78px;text-align:right;top:109px;font-size:10.8px;line-height:12px;letter-spacing:-0.25px;color:#2a2a2a">100 ms</div>
<div class="a" style="left:942px;top:105px;width:1px;height:80px;background:#d3e3fd"></div>
<div class="t" style="left:862.5px;width:78px;text-align:right;top:109px;font-size:10.8px;line-height:12px;letter-spacing:-0.25px;color:#2a2a2a">200 ms</div>
<div class="a" style="left:1013px;top:105px;width:1px;height:80px;background:#d3e3fd"></div>
<div class="t" style="left:933.5px;width:78px;text-align:right;top:109px;font-size:10.8px;line-height:12px;letter-spacing:-0.25px;color:#2a2a2a">300 ms</div>
<div class="a" style="left:1084px;top:105px;width:1px;height:80px;background:#d3e3fd"></div>
<div class="t" style="left:1004.5px;width:78px;text-align:right;top:109px;font-size:10.8px;line-height:12px;letter-spacing:-0.25px;color:#2a2a2a">400 ms</div>
<div class="a" style="left:1155px;top:105px;width:1px;height:80px;background:#d3e3fd"></div>
<div class="t" style="left:1075.5px;width:78px;text-align:right;top:109px;font-size:10.8px;line-height:12px;letter-spacing:-0.25px;color:#2a2a2a">500 ms</div>
<div class="a" style="left:1226px;top:105px;width:1px;height:80px;background:#d3e3fd"></div>
<div class="t" style="left:1146.5px;width:78px;text-align:right;top:109px;font-size:10.8px;line-height:12px;letter-spacing:-0.25px;color:#2a2a2a">600 ms</div>
<div class="a" style="left:1297px;top:105px;width:1px;height:80px;background:#d3e3fd"></div>
<div class="t" style="left:1217.5px;width:78px;text-align:right;top:109px;font-size:10.8px;line-height:12px;letter-spacing:-0.25px;color:#2a2a2a">700 ms</div>
<div class="a" style="left:1368px;top:105px;width:1px;height:80px;background:#d3e3fd"></div>
<div class="t" style="left:1288.5px;width:78px;text-align:right;top:109px;font-size:10.8px;line-height:12px;letter-spacing:-0.25px;color:#2a2a2a">800 ms</div>
<div class="a" style="left:1439px;top:105px;width:1px;height:80px;background:#d3e3fd"></div>
<div class="t" style="left:1359.5px;width:78px;text-align:right;top:109px;font-size:10.8px;line-height:12px;letter-spacing:-0.25px;color:#2a2a2a">900 ms</div>
<div class="a" style="left:1510px;top:105px;width:1px;height:80px;background:#d3e3fd"></div>
<div class="t" style="left:1430.5px;width:78px;text-align:right;top:109px;font-size:10.8px;line-height:12px;letter-spacing:-0.25px;color:#2a2a2a">1000 ms</div>
<div class="a" style="left:1581px;top:105px;width:1px;height:80px;background:#d3e3fd"></div>
<div class="t" style="left:1501.5px;width:78px;text-align:right;top:109px;font-size:10.8px;line-height:12px;letter-spacing:-0.25px;color:#2a2a2a">1100 ms</div>
<div class="a" style="left:1652px;top:105px;width:1px;height:80px;background:#d3e3fd"></div>
<div class="t" style="left:1572.5px;width:78px;text-align:right;top:109px;font-size:10.8px;line-height:12px;letter-spacing:-0.25px;color:#2a2a2a">1200 ms</div>
<div class="a" style="left:1723px;top:105px;width:1px;height:80px;background:#d3e3fd"></div>
<div class="t" style="left:1643.5px;width:78px;text-align:right;top:109px;font-size:10.8px;line-height:12px;letter-spacing:-0.25px;color:#2a2a2a">1300 ms</div>
<div class="a" style="left:1793px;top:105px;width:1px;height:80px;background:#d3e3fd"></div>
<div class="t" style="left:1713.5px;width:78px;text-align:right;top:109px;font-size:10.8px;line-height:12px;letter-spacing:-0.25px;color:#2a2a2a">1400 ms</div>
<div class="a" style="left:1864px;top:105px;width:1px;height:80px;background:#d3e3fd"></div>
<div class="t" style="left:1784.5px;width:78px;text-align:right;top:109px;font-size:10.8px;line-height:12px;letter-spacing:-0.25px;color:#2a2a2a">1500 ms</div>
<div class="t" style="left:1855.5px;width:78px;text-align:right;top:109px;font-size:10.8px;line-height:12px;letter-spacing:-0.25px;color:#2a2a2a">1600 ms</div>
<div class="a" style="left:801px;top:185px;width:1119px;height:1px;background:#d3e3fd"></div>
<div class="a" style="left:803px;top:136.5px;width:5px;height:1.5px;background:#d9a6f0"></div>
<div class="a" style="left:809px;top:136.5px;width:16px;height:1.5px;background:#87cf9c"></div>
<div class="a" style="left:826px;top:136.5px;width:10px;height:1.5px;background:#8ab4f8"></div>
<div class="a" style="left:803px;top:138px;width:203px;height:9px;background:#d7e3fb"></div>
<div class="a" style="left:803px;top:139px;width:3px;height:6px;background:#f2a65c"></div>
<div class="a" style="left:806px;top:139px;width:2px;height:6px;background:#c58af9"></div>
<div class="a" style="left:808px;top:139px;width:193px;height:6px;background:#34b75a"></div>
<div class="a" style="left:1001px;top:139px;width:3px;height:6px;background:#4a8af4"></div>
<div class="a" style="left:1004px;top:140px;width:4px;height:1.5px;background:#4a8af4"></div>
<div class="a" style="left:1004px;top:142.5px;width:6px;height:1.5px;background:#4a8af4"></div>
<div class="a" style="left:1004px;top:145px;width:6px;height:1.5px;background:#4a8af4"></div>
<div class="a" style="left:803px;top:148.5px;width:5px;height:2px;background:#e0b0f0"></div>
<div class="a" style="left:808px;top:148.5px;width:200px;height:2px;background:#34b75a"></div>
<div class="a" style="left:1008px;top:148px;width:10px;height:2.5px;background:#4a8af4"></div>
<div class="a" style="left:1765.5px;top:148.5px;width:15.5px;height:2.5px;background:#34b75a"></div>
<div class="a" style="left:1782px;top:148.5px;width:9px;height:2.5px;background:#4a8af4"></div>
<div class="a" style="left:801px;top:123px;width:2px;height:62px;background:#a8c7fa"></div>
<div class="a" style="left:800px;top:105px;width:6px;height:18.5px;background:#d3e3fd;border:1px solid #a8c7fa;border-left:none;border-radius:0 4px 4px 0"></div>
<div class="a" style="left:801.8px;top:111px;width:1.4px;height:7px;background:#0b57d0;border-radius:1px"></div>
<div class="a" style="left:1918px;top:123px;width:2px;height:62px;background:#a8c7fa"></div>
<div class="a" style="left:1915px;top:105px;width:5px;height:18.5px;background:#d3e3fd;border:1px solid #a8c7fa;border-right:none;border-radius:4px 0 0 4px"></div>
<div class="a" style="left:1917.8px;top:111px;width:1.4px;height:7px;background:#0b57d0;border-radius:1px"></div>
<div class="a" style="left:801px;top:186px;width:373px;height:27px;background:#f8f9fd;border-bottom:1px solid #d3e3fd"></div>
<div class="t" style="left:806.5px;top:193.42px;font-size:12.5px;line-height:12.5px;color:#2a2a2a;font-weight:400;font-family:'Liberation Sans',sans-serif;letter-spacing:0.485px;">Name</div>
<div class="a" style="left:1174px;top:186px;width:1px;height:733px;background:#d3e3fd"></div>
<div class="a" style="left:801px;top:213px;width:373px;height:21px;background:#f8f9fd"></div>
<svg style="left:806px;top:218.5px" width="15" height="11" viewBox="0 0 15 11"><g fill="none" stroke="#eb7634" stroke-width="1.45" stroke-linecap="round"><path d="M5.5 0.9C4 0.9 3.2 1.6 3.2 3V4C3.2 5 2.4 5.5 1 5.5C2.4 5.5 3.2 6 3.2 7V8C3.2 9.4 4 10.1 5.5 10.1"/><path d="M8.8 0.9C10.3 0.9 11.1 1.6 11.1 3V4C11.1 5 11.9 5.5 13.3 5.5C11.9 5.5 11.1 6 11.1 7V8C11.1 9.4 10.3 10.1 8.8 10.1"/><path d="M7.3 5.9L6.7 8.6"/></g><circle cx="7.2" cy="3.3" r="1" fill="#eb7634"/></svg>
<div class="t" style="left:824.5px;top:218.42px;font-size:12.5px;line-height:12.5px;color:#2a2a2a;font-weight:400;font-family:'Liberation Sans',sans-serif;letter-spacing:0.361px;">getUserIntentionOpinionTop</div>
<svg style="left:806px;top:239.5px" width="15" height="11" viewBox="0 0 15 11"><g fill="none" stroke="#eb7634" stroke-width="1.45" stroke-linecap="round"><path d="M5.5 0.9C4 0.9 3.2 1.6 3.2 3V4C3.2 5 2.4 5.5 1 5.5C2.4 5.5 3.2 6 3.2 7V8C3.2 9.4 4 10.1 5.5 10.1"/><path d="M8.8 0.9C10.3 0.9 11.1 1.6 11.1 3V4C11.1 5 11.9 5.5 13.3 5.5C11.9 5.5 11.1 6 11.1 7V8C11.1 9.4 10.3 10.1 8.8 10.1"/><path d="M7.3 5.9L6.7 8.6"/></g><circle cx="7.2" cy="3.3" r="1" fill="#eb7634"/></svg>
<div class="t" style="left:824.5px;top:239.42px;font-size:12.5px;line-height:12.5px;color:#2a2a2a;font-weight:400;font-family:'Liberation Sans',sans-serif;letter-spacing:0.120px;">getDataTrendChange</div>
<div class="a" style="left:801px;top:255px;width:373px;height:21px;background:#dfe2e1"></div>
<svg style="left:806px;top:260.5px" width="15" height="11" viewBox="0 0 15 11"><g fill="none" stroke="#eb7634" stroke-width="1.45" stroke-linecap="round"><path d="M5.5 0.9C4 0.9 3.2 1.6 3.2 3V4C3.2 5 2.4 5.5 1 5.5C2.4 5.5 3.2 6 3.2 7V8C3.2 9.4 4 10.1 5.5 10.1"/><path d="M8.8 0.9C10.3 0.9 11.1 1.6 11.1 3V4C11.1 5 11.9 5.5 13.3 5.5C11.9 5.5 11.1 6 11.1 7V8C11.1 9.4 10.3 10.1 8.8 10.1"/><path d="M7.3 5.9L6.7 8.6"/></g><circle cx="7.2" cy="3.3" r="1" fill="#eb7634"/></svg>
<div class="t" style="left:824.5px;top:260.42px;font-size:12.5px;line-height:12.5px;color:#2a2a2a;font-weight:400;font-family:'Liberation Sans',sans-serif;letter-spacing:0.237px;">get-tag-analysis</div>
<svg style="left:806px;top:281.5px" width="15" height="11" viewBox="0 0 15 11"><g fill="none" stroke="#eb7634" stroke-width="1.45" stroke-linecap="round"><path d="M5.5 0.9C4 0.9 3.2 1.6 3.2 3V4C3.2 5 2.4 5.5 1 5.5C2.4 5.5 3.2 6 3.2 7V8C3.2 9.4 4 10.1 5.5 10.1"/><path d="M8.8 0.9C10.3 0.9 11.1 1.6 11.1 3V4C11.1 5 11.9 5.5 13.3 5.5C11.9 5.5 11.1 6 11.1 7V8C11.1 9.4 10.3 10.1 8.8 10.1"/><path d="M7.3 5.9L6.7 8.6"/></g><circle cx="7.2" cy="3.3" r="1" fill="#eb7634"/></svg>
<div class="t" style="left:824.5px;top:281.42px;font-size:12.5px;line-height:12.5px;color:#2a2a2a;font-weight:400;font-family:'Liberation Sans',sans-serif;letter-spacing:0.259px;">get-series-rank</div>
<div class="a" style="left:801px;top:297px;width:373px;height:21px;background:#f8f9fd"></div>
<svg style="left:806px;top:302.5px" width="15" height="11" viewBox="0 0 15 11"><g fill="none" stroke="#eb7634" stroke-width="1.45" stroke-linecap="round"><path d="M5.5 0.9C4 0.9 3.2 1.6 3.2 3V4C3.2 5 2.4 5.5 1 5.5C2.4 5.5 3.2 6 3.2 7V8C3.2 9.4 4 10.1 5.5 10.1"/><path d="M8.8 0.9C10.3 0.9 11.1 1.6 11.1 3V4C11.1 5 11.9 5.5 13.3 5.5C11.9 5.5 11.1 6 11.1 7V8C11.1 9.4 10.3 10.1 8.8 10.1"/><path d="M7.3 5.9L6.7 8.6"/></g><circle cx="7.2" cy="3.3" r="1" fill="#eb7634"/></svg>
<div class="t" style="left:824.5px;top:302.42px;font-size:12.5px;line-height:12.5px;color:#2a2a2a;font-weight:400;font-family:'Liberation Sans',sans-serif;letter-spacing:0.128px;">getVocListSounds</div>
<svg style="left:806px;top:323.5px" width="15" height="11" viewBox="0 0 15 11"><g fill="none" stroke="#eb7634" stroke-width="1.45" stroke-linecap="round"><path d="M5.5 0.9C4 0.9 3.2 1.6 3.2 3V4C3.2 5 2.4 5.5 1 5.5C2.4 5.5 3.2 6 3.2 7V8C3.2 9.4 4 10.1 5.5 10.1"/><path d="M8.8 0.9C10.3 0.9 11.1 1.6 11.1 3V4C11.1 5 11.9 5.5 13.3 5.5C11.9 5.5 11.1 6 11.1 7V8C11.1 9.4 10.3 10.1 8.8 10.1"/><path d="M7.3 5.9L6.7 8.6"/></g><circle cx="7.2" cy="3.3" r="1" fill="#eb7634"/></svg>
<div class="t" style="left:824.5px;top:323.42px;font-size:12.5px;line-height:12.5px;color:#2a2a2a;font-weight:400;font-family:'Liberation Sans',sans-serif;letter-spacing:0.128px;">getVocListSounds</div>
<div class="a" style="left:801px;top:892px;width:373px;height:1px;background:#d3e3fd"></div>
<div class="t" style="left:811px;top:901.42px;font-size:12.5px;line-height:12.5px;color:#474747;font-weight:400;font-family:'Liberation Sans',sans-serif;letter-spacing:0.158px;">6 requests</div>
<div class="a" style="left:879px;top:897px;width:1px;height:17px;background:#d3e3fd"></div>
<div class="t" style="left:890px;top:901.42px;font-size:12.5px;line-height:12.5px;color:#474747;font-weight:400;font-family:'Liberation Sans',sans-serif;letter-spacing:0.083px;">10.5 kB transferred</div>
<div class="a" style="left:1007px;top:897px;width:1px;height:17px;background:#d3e3fd"></div>
<div class="t" style="left:1017px;top:901.42px;font-size:12.5px;line-height:12.5px;color:#474747;font-weight:400;font-family:'Liberation Sans',sans-serif;letter-spacing:-0.033px;">8.8 kB resources</div>
<div class="a" style="left:1175px;top:186px;width:745px;height:27px;background:#edf0f8;border-bottom:1px solid #d3e3fd"></div>
<svg style="left:1187px;top:194px" width="10" height="10"><path d="M0.7 0.7L9.3 9.3M9.3 0.7L0.7 9.3" stroke="#474747" stroke-width="1.5"/></svg>
<div class="t" style="left:1215px;top:193.42px;font-size:12.5px;line-height:12.5px;color:#474747;font-weight:400;font-family:'Liberation Sans',sans-serif;letter-spacing:0.025px;">Headers</div>
<div class="t" style="left:1281.7px;top:193.42px;font-size:12.5px;line-height:12.5px;color:#474747;font-weight:400;font-family:'Liberation Sans',sans-serif;letter-spacing:-0.065px;">Payload</div>
<div class="t" style="left:1346.7px;top:193.42px;font-size:12.5px;line-height:12.5px;color:#0b57d0;font-weight:400;font-family:'Liberation Sans',sans-serif;letter-spacing:0.055px;">Preview</div>
<div class="t" style="left:1410.8px;top:193.42px;font-size:12.5px;line-height:12.5px;color:#474747;font-weight:400;font-family:'Liberation Sans',sans-serif;letter-spacing:-0.157px;">Response</div>
<div class="t" style="left:1485.8px;top:193.42px;font-size:12.5px;line-height:12.5px;color:#474747;font-weight:400;font-family:'Liberation Sans',sans-serif;letter-spacing:0.525px;">Initiator</div>
<div class="t" style="left:1550.8px;top:193.42px;font-size:12.5px;line-height:12.5px;color:#474747;font-weight:400;font-family:'Liberation Sans',sans-serif;letter-spacing:0.431px;">Timing</div>
<div class="a" style="left:1337px;top:211px;width:64px;height:2px;background:#0a5ce6;border-radius:1px 1px 0 0"></div>
<div class="a" style="left:1175px;top:313px;width:739px;height:16px;background:#f0f0f0"></div>
<div class="a" style="left:1232.5px;top:393px;width:127px;height:16px;background:#f1f1f1;border-radius:2px"></div>
<svg style="left:1185px;top:222.5px" width="8" height="6"><path d="M0 0H8L4 6Z" fill="#474747"/></svg>
<div class="t" style="left:1198.5px;top:219.84px;font-family:'Liberation Mono',monospace;font-size:10px;line-height:14px;color:#1f1f1f;-webkit-text-stroke:0.2px">{success: true, message: "<span style="font-family:'Liberation Sans',sans-serif;font-size:12px;line-height:0">操作成功！</span>", code: "200",<span style="letter-spacing:-2px">···</span>}</div>
<div class="t" style="left:1209.5px;top:235.84px;font-family:'Liberation Mono',monospace;font-size:10px;line-height:14px;color:#1f1f1f;-webkit-text-stroke:0.2px"><span style="color:#7a0a45">code</span>: <span style="color:#d7302a">"200"</span></div>
<div class="t" style="left:1209.5px;top:251.84px;font-family:'Liberation Mono',monospace;font-size:10px;line-height:14px;color:#1f1f1f;-webkit-text-stroke:0.2px"><span style="color:#7a0a45">message</span>: <span style="color:#d7302a">"<span style="font-family:'Liberation Sans',sans-serif;font-size:12px;line-height:0">操作成功！</span>"</span></div>
<svg style="left:1197px;top:270.5px" width="8" height="6"><path d="M0 0H8L4 6Z" fill="#474747"/></svg>
<div class="t" style="left:1208.5px;top:267.84px;font-family:'Liberation Mono',monospace;font-size:10px;line-height:14px;color:#1f1f1f;-webkit-text-stroke:0.2px"><span style="color:#7a0a45">result</span>: [{tagName: null, tagCode: null, tagLevel: null, tagType: "DOM", mention: 0, positiveMention: 0,<span style="letter-spacing:-2px">···</span>}]</div>
<svg style="left:1209px;top:286.5px" width="8" height="6"><path d="M0 0H8L4 6Z" fill="#474747"/></svg>
<div class="t" style="left:1220.5px;top:283.84px;font-family:'Liberation Mono',monospace;font-size:10px;line-height:14px;color:#1f1f1f;-webkit-text-stroke:0.2px"><span style="color:#7a0a45">0</span>: {tagName: null, tagCode: null, tagLevel: null, tagType: "DOM", mention: 0, positiveMention: 0,<span style="letter-spacing:-2px">···</span>}</div>
<div class="t" style="left:1232.5px;top:299.84px;font-family:'Liberation Mono',monospace;font-size:10px;line-height:14px;color:#1f1f1f;-webkit-text-stroke:0.2px"><span style="color:#7a0a45">mention</span>: <span style="color:#1a4fb5">0</span></div>
<div class="t" style="left:1232.5px;top:315.84px;font-family:'Liberation Mono',monospace;font-size:10px;line-height:14px;color:#1f1f1f;-webkit-text-stroke:0.2px"><span style="color:#7a0a45">mentionMom</span>: <span style="color:#9e9e9e">null</span></div>
<div class="t" style="left:1232.5px;top:331.84px;font-family:'Liberation Mono',monospace;font-size:10px;line-height:14px;color:#1f1f1f;-webkit-text-stroke:0.2px"><span style="color:#7a0a45">mentionYoy</span>: <span style="color:#9e9e9e">null</span></div>
<div class="t" style="left:1232.5px;top:347.84px;font-family:'Liberation Mono',monospace;font-size:10px;line-height:14px;color:#1f1f1f;-webkit-text-stroke:0.2px"><span style="color:#7a0a45">negativeMention</span>: <span style="color:#1a4fb5">0</span></div>
<div class="t" style="left:1232.5px;top:363.84px;font-family:'Liberation Mono',monospace;font-size:10px;line-height:14px;color:#1f1f1f;-webkit-text-stroke:0.2px"><span style="color:#7a0a45">negativeRate</span>: <span style="color:#d7302a">"0.00"</span></div>
<div class="t" style="left:1232.5px;top:379.84px;font-family:'Liberation Mono',monospace;font-size:10px;line-height:14px;color:#1f1f1f;-webkit-text-stroke:0.2px"><span style="color:#7a0a45">negativeRateMom</span>: <span style="color:#9e9e9e">null</span></div>
<div class="t" style="left:1232.5px;top:395.84px;font-family:'Liberation Mono',monospace;font-size:10px;line-height:14px;color:#1f1f1f;-webkit-text-stroke:0.2px"><span style="color:#7a0a45">negativeRateYoy</span>: <span style="color:#9e9e9e">null</span></div>
<div class="t" style="left:1232.5px;top:411.84px;font-family:'Liberation Mono',monospace;font-size:10px;line-height:14px;color:#1f1f1f;-webkit-text-stroke:0.2px"><span style="color:#7a0a45">neutralMention</span>: <span style="color:#1a4fb5">0</span></div>
<div class="t" style="left:1232.5px;top:427.84px;font-family:'Liberation Mono',monospace;font-size:10px;line-height:14px;color:#1f1f1f;-webkit-text-stroke:0.2px"><span style="color:#7a0a45">positiveMention</span>: <span style="color:#1a4fb5">0</span></div>
<div class="t" style="left:1232.5px;top:443.84px;font-family:'Liberation Mono',monospace;font-size:10px;line-height:14px;color:#1f1f1f;-webkit-text-stroke:0.2px"><span style="color:#7a0a45">rateColor</span>: <span style="color:#d7302a">"#aeeeb7"</span></div>
<div class="t" style="left:1232.5px;top:459.84px;font-family:'Liberation Mono',monospace;font-size:10px;line-height:14px;color:#1f1f1f;-webkit-text-stroke:0.2px"><span style="color:#7a0a45">tagCode</span>: <span style="color:#9e9e9e">null</span></div>
<div class="t" style="left:1232.5px;top:475.84px;font-family:'Liberation Mono',monospace;font-size:10px;line-height:14px;color:#1f1f1f;-webkit-text-stroke:0.2px"><span style="color:#7a0a45">tagLevel</span>: <span style="color:#9e9e9e">null</span></div>
<div class="t" style="left:1232.5px;top:491.84px;font-family:'Liberation Mono',monospace;font-size:10px;line-height:14px;color:#1f1f1f;-webkit-text-stroke:0.2px"><span style="color:#7a0a45">tagName</span>: <span style="color:#9e9e9e">null</span></div>
<div class="t" style="left:1232.5px;top:507.84px;font-family:'Liberation Mono',monospace;font-size:10px;line-height:14px;color:#1f1f1f;-webkit-text-stroke:0.2px"><span style="color:#7a0a45">tagType</span>: <span style="color:#d7302a">"DOM"</span></div>
<div class="t" style="left:1209.5px;top:523.84px;font-family:'Liberation Mono',monospace;font-size:10px;line-height:14px;color:#1f1f1f;-webkit-text-stroke:0.2px"><span style="color:#7a0a45">success</span>: <span style="color:#1a4fb5">true</span></div>
<div class="t" style="left:1209.5px;top:539.84px;font-family:'Liberation Mono',monospace;font-size:10px;line-height:14px;color:#1f1f1f;-webkit-text-stroke:0.2px"><span style="color:#7a0a45">tid</span>: <span style="color:#d7302a">""</span></div>
<div class="a" style="left:1175px;top:549px;width:745px;height:343px;background:#fff"></div>
<div class="a" style="left:1190px;top:266px;width:687px;height:284px;border:3px solid #ec3f35;border-radius:4px"></div>
<div class="t" style="left:224px;top:374px;font-size:16.5px;line-height:16.5px;font-weight:700;color:rgba(0,0,0,0.055);transform:rotate(-44.5deg);transform-origin:0 14px;letter-spacing:-0.4px">COCA150005110011</div>
<div class="t" style="left:891px;top:374px;font-size:16.5px;line-height:16.5px;font-weight:700;color:rgba(0,0,0,0.055);transform:rotate(-44.5deg);transform-origin:0 14px;letter-spacing:-0.4px">COCA150005110011</div>
<div class="t" style="left:1556px;top:374px;font-size:16.5px;line-height:16.5px;font-weight:700;color:rgba(0,0,0,0.055);transform:rotate(-44.5deg);transform-origin:0 14px;letter-spacing:-0.4px">COCA150005110011</div>
</body></html>
